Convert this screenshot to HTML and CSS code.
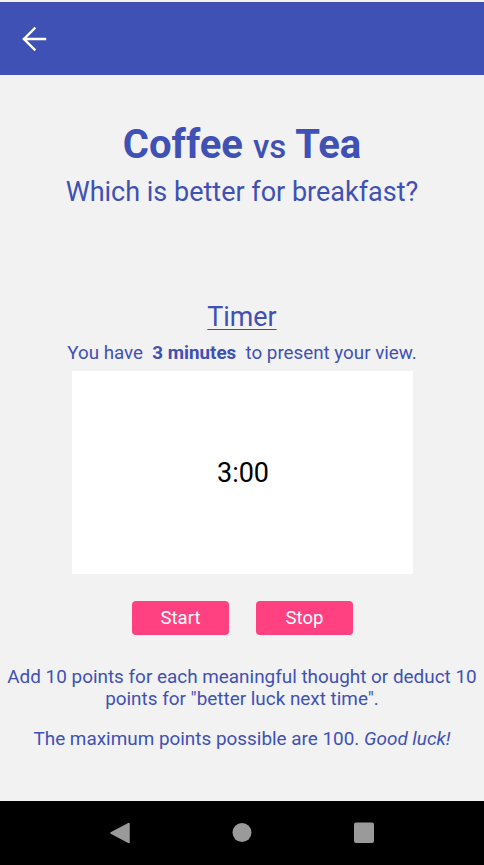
FILE: index.html
```html
<!DOCTYPE html>
<html>
<head>
<meta charset="utf-8">
<link rel="stylesheet" href="styles.css">
</head>
<body>
<div class="screen">
  <div class="status"></div>
  <header class="appbar">
    <svg class="back" width="26" height="26" viewBox="0 0 26 26">
      <path d="M3 13H24M13.5 2.5L3 13L13.5 23.5" fill="none" stroke="#fff" stroke-width="2.4" stroke-linecap="square" stroke-linejoin="miter"/>
    </svg>
  </header>
  <main class="content">
    <h1 class="title"><span class="big">Coffee</span> <span class="vs">vs</span> <span class="big">Tea</span></h1>
    <h2 class="subtitle">Which is better for breakfast?</h2>
    <h3 class="timer-head">Timer</h3>
    <p class="info">You have&nbsp; <b>3 minutes</b>&nbsp; to present your view.</p>
    <div class="timer-box"><span class="time">3:00</span></div>
    <div class="buttons">
      <button class="btn">Start</button>
      <button class="btn">Stop</button>
    </div>
    <p class="rules">Add 10 points for each meaningful thought or deduct 10 points for "better luck next time".</p>
    <p class="rules second">The maximum points possible are 100. <i>Good luck!</i></p>
  </main>
  <nav class="navbar">
    <svg width="20" height="22" viewBox="0 0 20 22"><path d="M19 1.5V20.5L1 11Z" fill="#9a9a9a" stroke="#9a9a9a" stroke-width="1.5" stroke-linejoin="round"/></svg>
    <svg width="20" height="22" viewBox="0 0 20 22"><circle cx="10" cy="10.5" r="9.5" fill="#9a9a9a"/></svg>
    <svg width="20" height="22" viewBox="0 0 20 22"><rect x="0" y="0.5" width="20" height="20.5" rx="2" fill="#9a9a9a"/></svg>
  </nav>
</div>
</body>
</html>
```
FILE: styles.css
```css
* { box-sizing: border-box; }
html, body { margin: 0; padding: 0; }
body {
  font-family: Roboto, "Liberation Sans", sans-serif;
  background: #f2f2f2;
}
.screen {
  width: 484px;
  height: 865px;
  display: flex;
  flex-direction: column;
  background: #f2f2f2;
}
.status { height: 2px; background: #f2f2f2; }
.appbar {
  height: 73px;
  background: #3f51b5;
  display: flex;
  align-items: center;
  padding-left: 21px;
}
.back { display: block; }
.content {
  flex: 1;
  display: flex;
  flex-direction: column;
  align-items: center;
  padding-top: 46px;
  color: #3f51b5;
}
.title {
  margin: 0;
  font-size: 40px;
  line-height: 48px;
  font-weight: 700;
  text-align: center;
}
.title .vs { font-size: 33px; font-weight: 500; }
.subtitle {
  margin: 5px 0 0;
  font-size: 27px;
  line-height: 32px;
  font-weight: 400;
}
.timer-head {
  margin: 93px 0 0;
  font-size: 26.8px;
  line-height: 32px;
  font-weight: 400;
  text-decoration: underline;
  text-decoration-thickness: 1px;
  text-underline-offset: 3px;
}
.info {
  margin: 9px 0 0;
  font-size: 18.8px;
  line-height: 22px;
}
.info b { font-weight: 700; }
.timer-box {
  margin-top: 7px;
  width: 341px;
  height: 203px;
  background: #ffffff;
  display: flex;
  align-items: center;
  justify-content: center;
}
.time {
  font-size: 27px;
  color: #000;
  margin-left: 2px;
  margin-top: 1px;
}
.buttons {
  margin-top: 27px;
  display: flex;
  gap: 27px;
  margin-left: 1px;
}
.btn {
  width: 97px;
  height: 34px;
  border: none;
  border-radius: 4px;
  background: #ff4081;
  color: #fff;
  font-family: Roboto, "Liberation Sans", sans-serif;
  font-size: 18.5px;
  padding: 0;
}
.rules {
  margin: 31px 0 0;
  padding: 0 4px;
  font-size: 18.9px;
  line-height: 22px;
  text-align: center;
}
.rules.second { margin-top: 18px; }
.navbar {
  height: 64px;
  background: #000;
  display: flex;
  align-items: center;
  justify-content: center;
  gap: 102px;
  padding-bottom: 1px;
}
.navbar svg { display: block; }
```
